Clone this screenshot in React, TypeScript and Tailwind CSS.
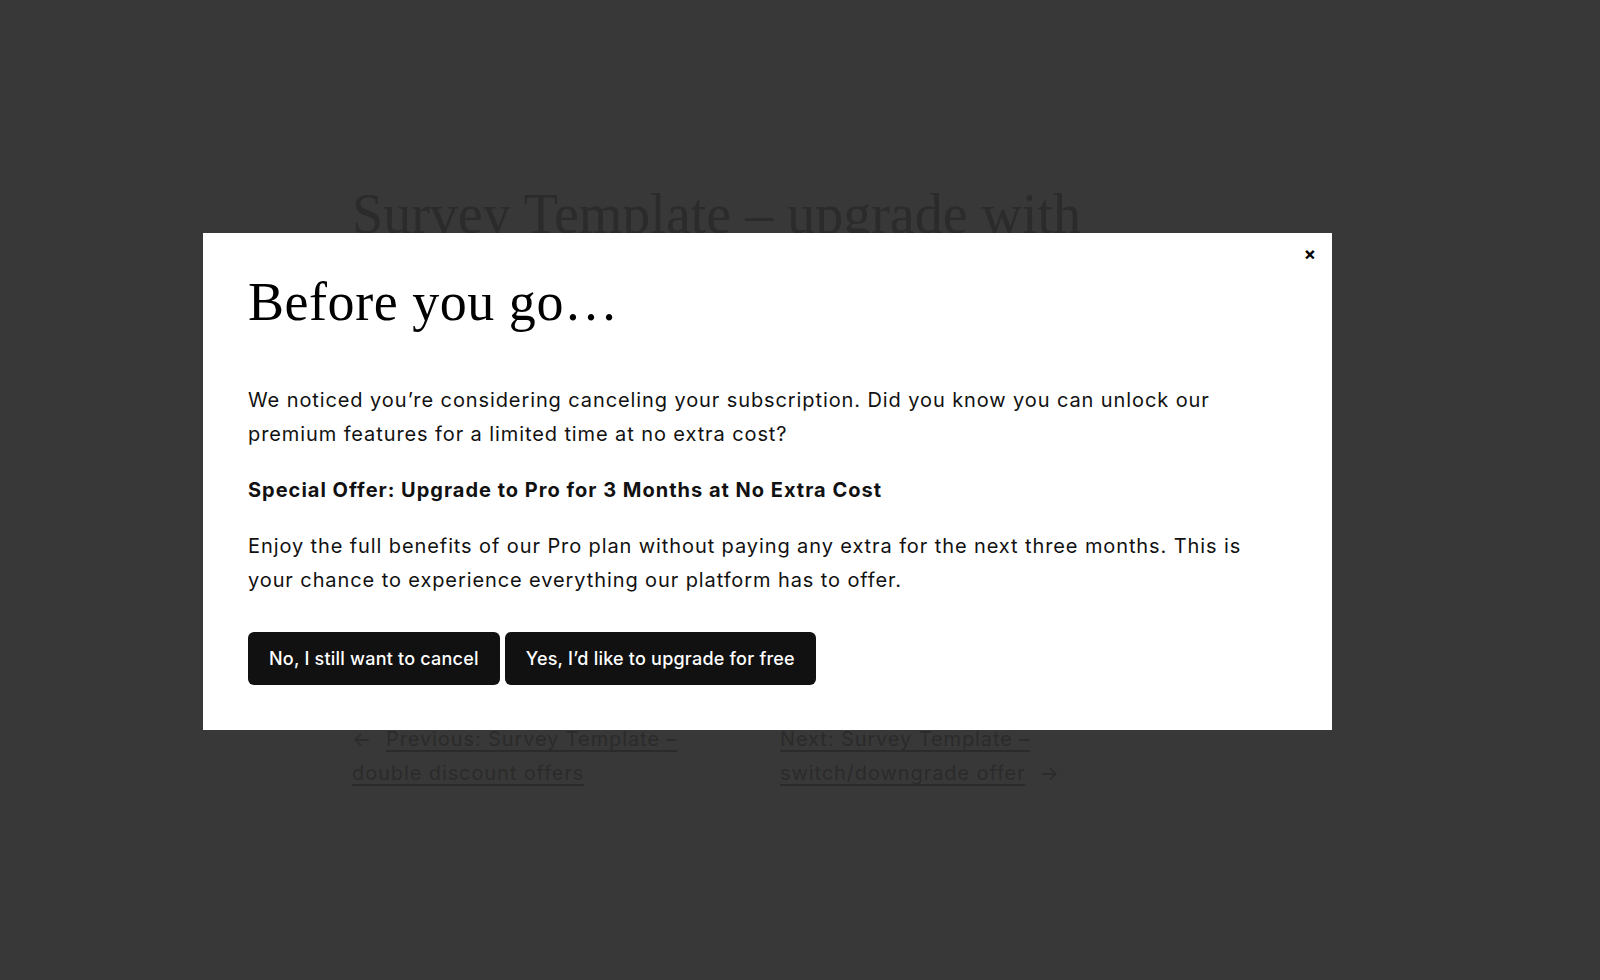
export default function App() {
    return (
        <div className="relative min-h-[980px] w-full bg-[#383838] overflow-hidden" style={{ fontFamily: "Inter, 'Noto Sans', sans-serif" }}>
            <main className="mx-auto w-[896px] pt-[181px] text-[#2b2b2b]">
                <h1 className="text-[56px] leading-[1.2] font-normal" style={{ fontFamily: "'Liberation Serif', serif" }}>
                    Survey Template – upgrade with
                </h1>
                <div className="h-[474px]"></div>
                <nav className="flex text-[20px] leading-[34px] tracking-[0.045em]">
                    <div className="w-[428px] pr-[50px]">
                        <span className="mr-[14px]">←</span>
                        <a href="#" className="underline underline-offset-4">Previous: Survey Template – double discount offers</a>
                    </div>
                    <div className="w-[320px]">
                        <a href="#" className="underline underline-offset-4">Next: Survey Template – switch/downgrade offer</a>
                        <span className="ml-[14px]">→</span>
                    </div>
                </nav>
            </main>

            <div className="absolute left-[203px] top-[233px] w-[1129px] bg-white px-[45px] pt-[37px] pb-[45px] text-[#111]">
                <button className="absolute right-[16px] top-[12px] text-[18px] font-bold leading-none text-black">×</button>
                <h2 className="text-[54px] leading-[1.2] font-normal tracking-[0.01em] text-black" style={{ fontFamily: "'Liberation Serif', serif" }}>
                    Before you go…
                </h2>
                <p className="mt-[48px] text-[20px] leading-[34px] tracking-[0.045em]">
                    We noticed you’re considering canceling your subscription. Did you know you can unlock our premium features for a limited time at no extra cost?
                </p>
                <p className="mt-[22px] text-[20px] leading-[34px] font-bold tracking-[0.05em]">
                    Special Offer: Upgrade to Pro for 3 Months at No Extra Cost
                </p>
                <p className="mt-[22px] text-[20px] leading-[34px] tracking-[0.045em]">
                    Enjoy the full benefits of our Pro plan without paying any extra for the next three months. This is your chance to experience everything our platform has to offer.
                </p>
                <div className="mt-[35px] flex gap-[5px]">
                    <button className="h-[53px] rounded-[6px] bg-[#111] px-[21px] text-[18px] font-medium tracking-[0.012em] text-white">No, I still want to cancel</button>
                    <button className="h-[53px] rounded-[6px] bg-[#111] px-[21px] text-[18px] font-medium tracking-[0.012em] text-white">Yes, I’d like to upgrade for free</button>
                </div>
            </div>
        </div>
    );
}
